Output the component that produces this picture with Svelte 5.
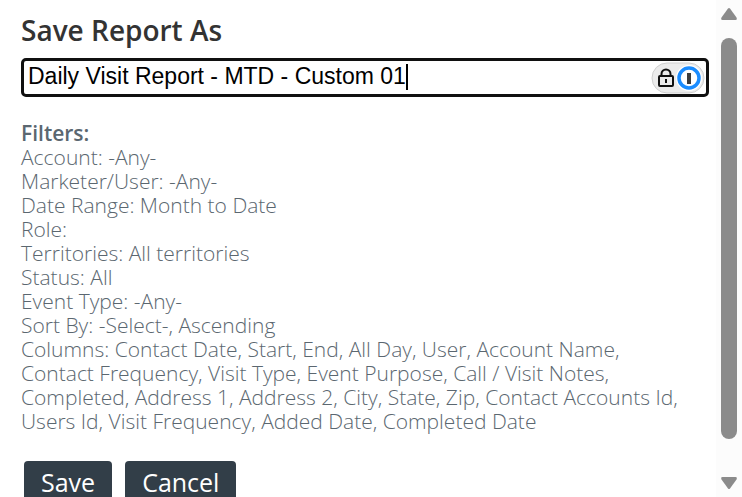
<script lang="ts">
  import { onMount } from "svelte";

  const filters = [
    { label: "Account", value: "-Any-" },
    { label: "Marketer/User", value: "-Any-" },
    { label: "Date Range", value: "Month to Date" },
    { label: "Role", value: "" },
    { label: "Territories", value: "All territories" },
    { label: "Status", value: "All" },
    { label: "Event Type", value: "-Any-" },
    { label: "Sort By", value: "-Select-, Ascending" },
    {
      label: "Columns",
      value:
        "Contact Date, Start, End, All Day, User, Account Name, Contact Frequency, Visit Type, Event Purpose, Call / Visit Notes, Completed, Address 1, Address 2, City, State, Zip, Contact Accounts Id, Users Id, Visit Frequency, Added Date, Completed Date",
    },
  ];

  let name = $state("Daily Visit Report - MTD - Custom 01");
  let caret = $state(0);
  let pane: HTMLElement;
  let input: HTMLInputElement;

  // the caret is drawn by hand so that it is thicker than the native one
  function placeCaret() {
    const ctx = document.createElement("canvas").getContext("2d");
    const css = getComputedStyle(input);
    ctx.font = css.fontSize + " " + css.fontFamily;
    const end = input.selectionStart ?? name.length;
    caret = Math.round(
      ctx.measureText(name.slice(0, end)).width + parseFloat(css.paddingLeft) + parseFloat(css.borderLeftWidth)
    );
  }

  function scroll(step: number) {
    pane.scrollBy({ top: step, behavior: "smooth" });
  }

  onMount(() => {
    input.focus({ preventScroll: true });
    input.setSelectionRange(name.length, name.length);
    placeCaret();
  });
</script>

<div class="dialog">
  <form class="pane" bind:this={pane} onsubmit={(e) => e.preventDefault()}>
    <h1><label for="report-name">Save Report As</label></h1>

    <div class="field">
      <input
        id="report-name"
        type="text"
        autocomplete="off"
        spellcheck="false"
        bind:value={name}
        bind:this={input}
        oninput={placeCaret}
        onkeyup={placeCaret}
        onclick={placeCaret}
      />
      <span class="caret" style:left="{caret}px"></span>
      <button class="vault" type="button" aria-label="Fill from password manager">
        <svg viewBox="0 0 54 32" width="54" height="32">
          <rect x="1" y="1" width="52" height="30" rx="15" fill="#ececec" stroke="#cfcfcf" />
          <circle cx="38" cy="16" r="13" fill="#fff" />
          <circle cx="38" cy="16" r="10" fill="#fff" stroke="#1a8cff" stroke-width="3.500" />
          <rect x="36" y="11" width="4" height="11" fill="#3c3c3c" />
          <rect x="8" y="14" width="14" height="10" rx="1" fill="none" stroke="#111" stroke-width="2" />
          <path d="M10.500 14v-2a4.500 4.500 0 0 1 9 0V14" fill="none" stroke="#111" stroke-width="2" />
          <rect x="14" y="17" width="2" height="4" fill="#111" />
        </svg>
      </button>
    </div>

    <section class="filters">
      <h2>Filters:</h2>
      {#each filters as filter}
        <p>{filter.label}: {filter.value}</p>
      {/each}
    </section>

    <div class="actions">
      <button type="submit">Save</button>
      <button type="button">Cancel</button>
    </div>
  </form>

  <div class="scrollbar">
    <button type="button" aria-label="Scroll up" onclick={() => scroll(-40)}>
      <svg viewBox="0 0 16 12" width="16" height="12">
        <path d="M7 .5Q8 -.5 9 .5L15.500 9.500Q16.500 12 14.500 12H1.500Q-.5 12 .5 9.500Z" fill="#8b8b8b" />
      </svg>
    </button>
    <div class="thumb"></div>
    <button type="button" aria-label="Scroll down" onclick={() => scroll(40)}>
      <svg viewBox="0 0 16 12" width="16" height="12">
        <path d="M7 11.500Q8 12.500 9 11.500L15.500 2.500Q16.500 0 14.500 0H1.500Q-.5 0 .5 2.500Z" fill="#8b8b8b" />
      </svg>
    </button>
  </div>
</div>

<style>
  :global(body) {
    margin: 0;
    background: #fff;
  }

  .dialog {
    display: flex;
    height: 100vh;
    overflow: hidden;
    font-family: "Open Sans", "Noto Sans", sans-serif;
  }

  .pane {
    flex: 1;
    min-width: 0;
    box-sizing: border-box;
    padding: 12px 7px 0 21px;
    overflow-y: auto;
    scrollbar-width: none;
  }

  h1 {
    margin: 0 0 10px;
    font-size: 28px;
    line-height: 36px;
    font-weight: 600;
    color: #333;
  }

  .field {
    position: relative;
  }

  .field input {
    display: block;
    box-sizing: border-box;
    width: 100%;
    height: 39px;
    padding: 0 60px 2px 4px;
    border: 3px solid #101010;
    border-radius: 5px;
    outline: none;
    background: #fff;
    color: #000;
    caret-color: transparent;
    font-family: "Liberation Sans", Arial, sans-serif;
    font-size: 23px;
  }

  .caret {
    position: absolute;
    top: 6px;
    width: 2px;
    height: 26px;
    background: #000;
    pointer-events: none;
  }

  .vault {
    position: absolute;
    top: 4px;
    right: 4px;
    padding: 0;
    border: none;
    background: none;
    cursor: pointer;
  }

  .vault svg,
  .scrollbar svg {
    display: block;
  }

  .filters {
    margin-top: 24px;
    padding-right: 20px;
    font-size: 21px;
    line-height: 24px;
    font-weight: 300;
    color: #5b6770;
  }

  .filters h2 {
    margin: 0;
    font-size: 21px;
    line-height: 24px;
    font-weight: 600;
  }

  .filters p {
    margin: 0;
  }

  .actions {
    display: flex;
    gap: 13px;
    margin-top: 28px;
    padding: 0 3px 20px;
  }

  .actions button {
    padding: 3px 17px;
    border: none;
    border-radius: 4px;
    background: #323e48;
    color: #fff;
    font-family: inherit;
    font-size: 25px;
    line-height: 36px;
    cursor: pointer;
  }

  .scrollbar {
    display: flex;
    flex-direction: column;
    align-items: center;
    gap: 18px;
    box-sizing: border-box;
    width: 26px;
    padding: 8px 0;
    background: #fcfcfc;
  }

  .scrollbar button {
    padding: 0;
    border: none;
    background: none;
  }

  .thumb {
    flex: 1;
    width: 16px;
    margin-bottom: 20px;
    border-radius: 8px;
    background: #8b8b8b;
  }
</style>
